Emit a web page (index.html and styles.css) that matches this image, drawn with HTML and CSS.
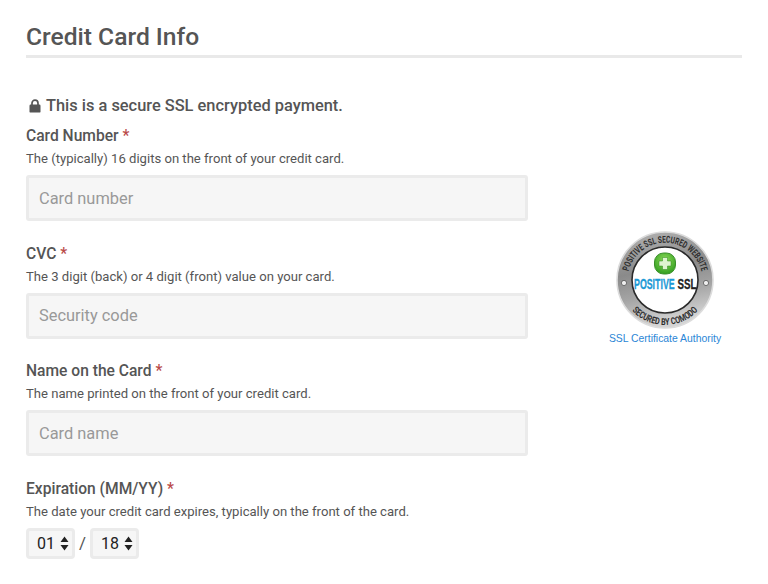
FILE: index.html
```html
<!DOCTYPE html>
<html lang="en">
<head>
  <meta charset="UTF-8" />
  <title>Credit Card Info</title>
  <meta name="viewport" content="width=device-width, initial-scale=1.0" />
  <link rel="stylesheet" href="styles.css">
</head>
<body>

<main class="page">
  <h1 class="heading">Credit Card Info</h1>

  <div class="columns">
    <form class="card-form">
      <div class="secure-note">
        <svg class="lock-icon" width="12" height="14" viewBox="0 0 12 14">
          <path d="M3 6V4.2a3 3 0 0 1 6 0V6" fill="none" stroke="#555" stroke-width="1.7"/>
          <rect x="0.5" y="5.6" width="11" height="8" rx="1.2" fill="#555"/>
        </svg>
        This is a secure SSL encrypted payment.
      </div>

      <div class="field">
        <label class="field-label">Card Number <span class="required">*</span></label>
        <p class="field-help">The (typically) 16 digits on the front of your credit card.</p>
        <input class="text-input" type="text" placeholder="Card number" />
      </div>

      <div class="field">
        <label class="field-label">CVC <span class="required">*</span></label>
        <p class="field-help">The 3 digit (back) or 4 digit (front) value on your card.</p>
        <input class="text-input" type="text" placeholder="Security code" />
      </div>

      <div class="field">
        <label class="field-label">Name on the Card <span class="required">*</span></label>
        <p class="field-help">The name printed on the front of your credit card.</p>
        <input class="text-input" type="text" placeholder="Card name" />
      </div>

      <div class="field">
        <label class="field-label">Expiration (MM/YY) <span class="required">*</span></label>
        <p class="field-help">The date your credit card expires, typically on the front of the card.</p>
        <div class="expiry">
          <div class="select-box">
            <select class="select-input"><option>01</option></select>
            <svg class="select-arrows" width="9" height="15" viewBox="0 0 9 15"><path d="M4.5 0.5L8.5 6H0.5zM4.5 14.5L0.5 9H8.5z" fill="#222"/></svg>
          </div>
          <span class="expiry-slash">/</span>
          <div class="select-box">
            <select class="select-input"><option>18</option></select>
            <svg class="select-arrows" width="9" height="15" viewBox="0 0 9 15"><path d="M4.5 0.5L8.5 6H0.5zM4.5 14.5L0.5 9H8.5z" fill="#222"/></svg>
          </div>
        </div>
      </div>
    </form>

    <aside class="ssl-badge">
      <svg width="100" height="100" viewBox="0 0 100 100">
        <defs>
          <linearGradient id="ringGrad" x1="0" y1="0" x2="0.2" y2="1">
            <stop offset="0" stop-color="#b4b4b4"/>
            <stop offset="0.45" stop-color="#8a8a8a"/>
            <stop offset="0.7" stop-color="#a4a4a4"/>
            <stop offset="1" stop-color="#d4d4d4"/>
          </linearGradient>
          <radialGradient id="plusGrad" cx="0.5" cy="0.35" r="0.7">
            <stop offset="0" stop-color="#8fdc5a"/>
            <stop offset="1" stop-color="#2c9a1c"/>
          </radialGradient>
          <path id="topArc" d="M13.1 43.5A37.5 37.5 0 0 1 86.9 43.5"/>
          <path id="bottomArc" d="M16 79.5A45 45 0 0 0 84 79.5"/>
        </defs>
        <circle cx="50" cy="50" r="48" fill="url(#ringGrad)" stroke="#dcdcdc" stroke-width="1.6"/>
        <circle cx="50" cy="50" r="33" fill="#fff" stroke="#2a2a2a" stroke-width="1.6"/>
        <text class="badge-ring-text"><textPath href="#topArc" startOffset="50%" text-anchor="middle" textLength="100" lengthAdjust="spacingAndGlyphs">POSITIVE SSL SECURED WEBSITE</textPath></text>
        <text class="badge-ring-text"><textPath href="#bottomArc" startOffset="50%" text-anchor="middle" textLength="74" lengthAdjust="spacingAndGlyphs">SECURED BY COMODO</textPath></text>
        <circle cx="9" cy="53" r="2.6" fill="#eee" stroke="#555" stroke-width="0.8"/>
        <circle cx="91" cy="53" r="2.6" fill="#eee" stroke="#555" stroke-width="0.8"/>
        <rect x="39.5" y="23" width="21" height="21" rx="9" fill="url(#plusGrad)" stroke="#3a8f2a" stroke-width="1"/>
        <path d="M47.5 27.5h5v3.5h3.5v5h-3.5v3.5h-5v-3.5h-3.5v-5h3.5z" fill="#dff5d0" stroke="#2c8a1c" stroke-width="0.5"/>
        <text class="badge-name badge-name-blue" transform="translate(19 58.5) scale(0.63 1)">POSITIVE</text>
        <text class="badge-name badge-name-dark" transform="translate(62.5 58.5) scale(0.7 1)">SSL</text>
      </svg>
      <a class="badge-link" href="#">SSL Certificate Authority</a>
    </aside>
  </div>
</main>

</body>
</html>
```

FILE: styles.css
```css
* {
  margin: 0; padding: 0; box-sizing: border-box;
  font-family: Roboto, Arial, sans-serif;
}
body {
  background: #fff;
  color: #555;
}
.page {
  padding: 21px 26px 0;
}
.heading {
  font-size: 24.6px;
  font-weight: 500;
  line-height: 32px;
  padding-bottom: 2px;
  border-bottom: 3px solid #e9e9e9;
  color: #555;
}
.columns {
  display: flex;
  gap: 60px;
  margin-top: 37px;
}
.card-form {
  width: 502px;
  flex-shrink: 0;
}
.secure-note {
  display: flex;
  align-items: center;
  gap: 5px;
  font-size: 16.4px;
  font-weight: 500;
  line-height: 22px;
  padding-left: 3px;
  margin-bottom: 9px;
}
.field {
  margin-bottom: 22.5px;
}
.field-label {
  display: block;
  font-size: 15.6px;
  font-weight: 500;
  line-height: 20px;
}
.required {
  color: #b94a48;
}
.field-help {
  font-size: 13.1px;
  line-height: 18px;
  margin-top: 4px;
  margin-bottom: 7px;
}
.text-input {
  display: block;
  width: 100%;
  height: 46px;
  padding: 0 10px;
  background: #f6f6f6;
  border: 3px solid #ebebeb;
  border-radius: 3px;
  font-size: 16.4px;
  color: #333;
}
.text-input::placeholder {
  color: #999;
  opacity: 1;
}
.expiry {
  display: flex;
  align-items: center;
  gap: 4px;
}
.expiry-slash {
  font-size: 17px;
  width: 7px;
  text-align: center;
}
.select-box {
  position: relative;
  width: 49px;
  height: 31px;
  background: #f6f6f6;
  border: 3px solid #ebebeb;
  border-radius: 4px;
}
.select-input {
  appearance: none;
  width: 100%;
  height: 100%;
  padding-left: 8px;
  background: transparent;
  border: none;
  font-size: 16px;
  color: #222;
}
.select-arrows {
  position: absolute;
  right: 3px;
  top: 5px;
  pointer-events: none;
}
.ssl-badge {
  flex: 1;
  display: flex;
  flex-direction: column;
  align-items: center;
  gap: 2px;
  padding-top: 135px;
}
.badge-ring-text {
  font-size: 9.5px;
  font-weight: 700;
  font-family: "Liberation Sans", Arial, sans-serif;
  fill: #2e2e2e;
}
.badge-name {
  font-size: 14px;
  font-weight: 700;
  font-family: "Liberation Sans", Arial, sans-serif;
  stroke-width: 0.3px;
}
.badge-name-blue {
  fill: #1d9ad6;
  stroke: #1d9ad6;
}
.badge-name-dark {
  fill: #222;
  stroke: #222;
}
.badge-link {
  font-family: "Liberation Sans", Arial, sans-serif;
  font-size: 10.4px;
  line-height: 14px;
  color: #2b86d6;
  text-decoration: none;
  white-space: nowrap;
}
```
